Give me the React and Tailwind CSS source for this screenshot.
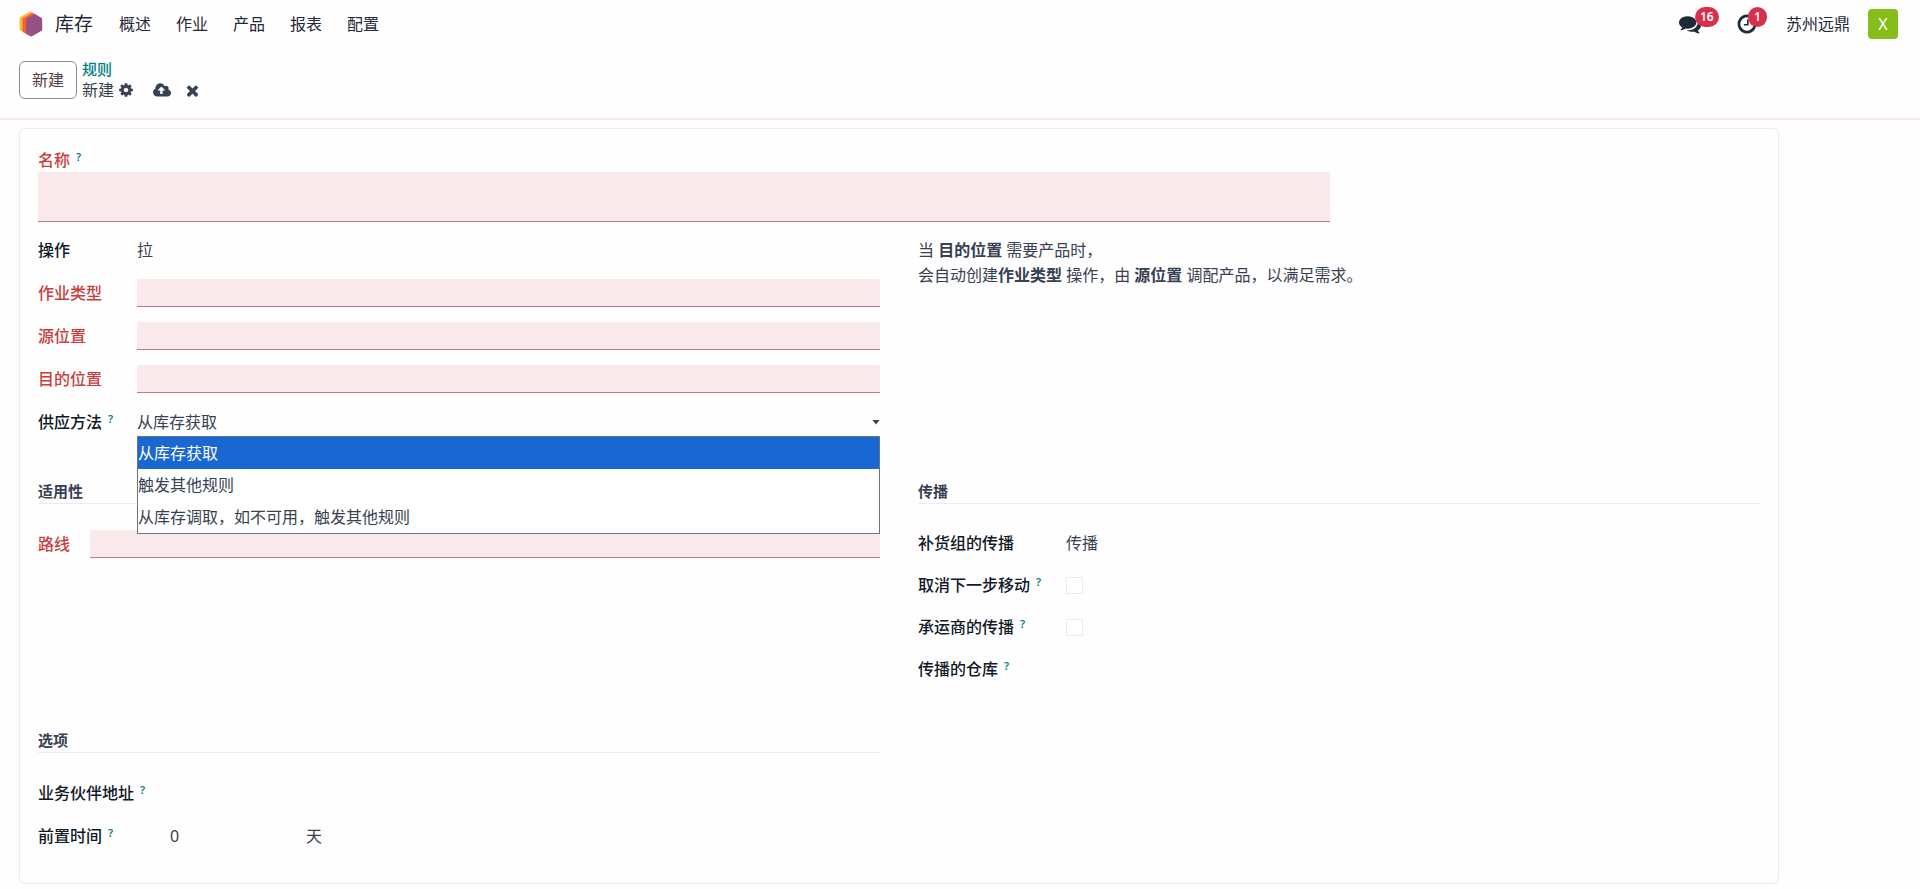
const MENU = ["概述", "作业", "产品", "报表", "配置"];

const ICONS = {
  comments: {
    box: "0 0 1792 1792",
    d: "M1408 768q0 139-94 257t-256.5 186.5-353.5 68.5q-86 0-176-16-124 88-278 128-36 9-86 16h-3q-11 0-20.5-8t-11.5-21q-1-3-1-6.5t.5-6.5 2-6l2.5-5 3.5-5.5 4-5 4.5-5 4-4.5q5-6 23-25t26-29.5 22.5-29 25-38.5 20.5-44q-124-72-195-177t-71-224q0-139 94-257t256.5-186.5 353.5-68.5 353.5 68.5 256.5 186.5 94 257zm384 256q0 120-71 224.5t-195 176.5q10 24 20.5 44t25 38.5 22.5 29 26 29.5 23 25q1 1 4 4.5t4.5 5 4 5 3.5 5.5l2.5 5 2 6 .5 6.5-1 6.5q-3 14-13 22t-22 7q-50-7-86-16-154-40-278-128-90 16-176 16-271 0-472-132 58 4 88 4 161 0 309-45t264-129q125-92 192-212t67-254q0-77-23-152 129 71 204 178t75 230z",
  },
  clock: {
    box: "0 0 1792 1792",
    d: "M1024 544v448q0 14-9 23t-23 9h-320q-14 0-23-9t-9-23v-64q0-14 9-23t23-9h224v-352q0-14 9-23t23-9h64q14 0 23 9t9 23zm416 352q0-148-73-273t-198-198-273-73-273 73-198 198-73 273 73 273 198 198 273 73 273-73 198-198 73-273zm224 0q0 209-103 385.5t-279.5 279.5-385.5 103-385.5-103-279.5-279.5-103-385.5 103-385.5 279.5-279.5 385.5-103 385.5 103 279.5 279.5 103 385.5z",
  },
  cog: {
    box: "0 0 1792 1792",
    d: "M1152 896q0-106-75-181t-181-75-181 75-75 181 75 181 181 75 181-75 75-181zm512-109v222q0 12-8 23t-20 13l-185 28q-19 54-39 91 35 50 107 138 10 12 10 25t-9 23q-27 37-99 108t-94 71q-12 0-26-9l-138-108q-44 23-91 38-16 136-29 186-7 28-36 28h-222q-14 0-24.5-8.5t-11.5-21.5l-28-184q-49-16-90-37l-141 107q-10 9-25 9-14 0-25-11-126-114-165-168-7-10-7-23 0-12 8-23 15-21 51-66.5t54-70.5q-27-50-41-99l-183-27q-13-2-21-12.5t-8-23.5v-222q0-12 8-23t19-13l186-28q14-46 39-92-40-57-107-138-10-12-10-24 0-10 9-23 26-36 98.5-107.5t94.5-71.5q13 0 26 10l138 107q44-23 91-38 16-136 29-186 7-28 36-28h222q14 0 24.5 8.5t11.5 21.5l28 184q49 16 90 37l142-107q9-9 24-9 13 0 25 10 129 119 165 170 7 8 7 22 0 12-8 23-15 21-51 66.5t-54 70.5q26 50 41 98l183 28q13 2 21 12.5t8 23.5z",
  },
  cloud: {
    box: "-64 0 1920 1792",
    d: "M1216 864q0-14-9-23l-352-352q-9-9-23-9t-23 9l-351 351q-10 12-10 24 0 14 9 23t23 9h224v352q0 13 9.5 22.5t22.5 9.5h192q13 0 22.5-9.5t9.5-22.5v-352h224q13 0 22.5-9.5t9.5-22.5zm640 288q0 159-112.5 271.5t-271.5 112.5h-1088q-185 0-316.5-131.5t-131.5-316.5q0-130 70-240t188-165q-2-30-2-43 0-212 150-362t362-150q156 0 285.5 87t188.5 231q71-62 166-62 106 0 181 75t75 181q0 76-41 138 130 31 213.5 135.5t83.5 238.5z",
  },
  times: {
    box: "0 0 1792 1792",
    d: "M1490 1322q0 40-28 68l-136 136q-28 28-68 28t-68-28l-294-294-294 294q-28 28-68 28t-68-28l-136-136q-28-28-28-68t28-68l294-294-294-294q-28-28-28-68t28-68l136-136q28-28 68-28t68 28l294 294 294-294q28-28 68-28t68 28l136 136q28 28 28 68t-28 68l-294 294 294 294q28 28 28 68z",
  },
};

function Icon({ name, className }) {
  return (
    <svg viewBox={ICONS[name].box} className={className} fill="currentColor" aria-hidden="true">
      <path d={ICONS[name].d} />
    </svg>
  );
}

function Logo() {
  return (
    <svg viewBox="0 0 24 26" className="h-[26px] w-6" aria-hidden="true">
      <path d="M1 6.200 10.500 0.800Q11.500 0.300 12.500 0.800L14 1.700V18L4 20.800 1 19.200Q0.500 18.800 0.500 18V7Q0.500 6.500 1 6.200z" fill="#fbb945" />
      <path d="M4 7.300 12.500 2.300Q13.500 1.700 14.500 2.300L17 3.800V18L9 24 4.200 21.200Q3.500 20.800 3.500 20V8Q3.500 7.600 4 7.300z" fill="#f86126" />
      <path d="M7.600 7.600 15 3.300Q15.700 3 16.400 3.300L22.600 6.900Q23.200 7.300 23.200 8V18.600Q23.200 19.300 22.600 19.700L13 25.200Q12.200 25.600 11.400 25.200L7.600 23Q7 22.600 7 22V8.700Q7 8 7.600 7.600z" fill="#985184" />
    </svg>
  );
}

function Help() {
  return <sup className="-top-[5px] ml-[6px] text-[11px] leading-none font-semibold text-[#017e84]">?</sup>;
}

function Label({ htmlFor, help, required, children }) {
  return (
    <label
      htmlFor={htmlFor}
      className={required ? "whitespace-nowrap font-medium text-[#c83f3c]" : "whitespace-nowrap font-medium text-[#111827]"}
    >
      {children}
      {help && <Help />}
    </label>
  );
}

function RequiredInput({ id }) {
  return (
    <input
      id={id}
      type="text"
      className="h-7 w-full min-w-0 rounded-t-xs border-b border-[#c5748a] bg-[#fae9ea] px-1 outline-none"
    />
  );
}

function SectionTitle({ children }) {
  return (
    <h2 className="mb-[18px] border-b border-[#ececee] text-[15px] leading-6 font-semibold text-[#374151]">
      {children}
    </h2>
  );
}

const ROW = "grid h-[43px] grid-cols-[99px_minmax(0,1fr)] items-center";
const ROW_RIGHT = "grid h-[42px] grid-cols-[148px_minmax(0,1fr)] items-center";
const CHECKBOX = "size-[17px] appearance-none border border-[#ebebed] bg-white";

function SupplyMethod() {
  return (
    <div className={ROW}>
      <Label htmlFor="method" help>供应方法</Label>
      <div className="relative">
        <select id="method" className="block h-7 w-full appearance-none bg-transparent outline-none" defaultValue="0">
          <option value="0">从库存获取</option>
          <option value="1">触发其他规则</option>
          <option value="2">从库存调取，如不可用，触发其他规则</option>
        </select>
        <svg viewBox="0 0 8 5" className="pointer-events-none absolute top-3 right-0 h-[5px] w-2" aria-hidden="true">
          <path d="M0.500 0h7l-3.500 4.500z" fill="#374151" />
        </svg>
        <ul
          role="listbox"
          aria-label="供应方法"
          className="absolute top-full left-0 z-10 w-full border border-[#6b7280] bg-white leading-8"
        >
          <li role="option" aria-selected="true" className="bg-[#1967d2] text-white">从库存获取</li>
          <li role="option" aria-selected="false">触发其他规则</li>
          <li role="option" aria-selected="false">从库存调取，如不可用，触发其他规则</li>
        </ul>
      </div>
    </div>
  );
}

export default function App() {
  return (
    <div className="min-h-screen bg-[#fefefe] font-['Noto_Sans','Noto_Sans_CJK_SC',sans-serif] text-base leading-6 text-[#374151]">
      <header className="border-b-2 border-[#f8e8ea] pb-[17px]">
        <nav className="flex h-12 items-center pr-[22px] pl-[19px] text-[#1f2937]">
          <a href="#home" className="flex items-center gap-3">
            <Logo />
            <span className="text-[19px]">库存</span>
          </a>
          <div className="ml-[26px] flex gap-[25px]">
            {MENU.map((item) => (
              <a key={item} href={"#" + item}>{item}</a>
            ))}
          </div>
          <div className="ml-auto flex items-center">
            <button type="button" aria-label="消息" className="relative">
              <Icon name="comments" className="size-[22px]" />
              <span className="absolute -top-[6px] left-4 rounded-full bg-[#d9304a] px-[5px] text-xs leading-5 font-semibold text-white">16</span>
            </button>
            <button type="button" aria-label="活动" className="relative ml-[35px]">
              <Icon name="clock" className="size-[22px]" />
              <span className="absolute -top-[6px] left-3 rounded-full bg-[#d9304a] px-[6px] text-xs leading-5 font-semibold text-white">1</span>
            </button>
            <button type="button" className="ml-7 flex items-center gap-[18px]">
              <span>苏州远鼎</span>
              <span className="flex size-[30px] items-center justify-center rounded bg-[#85bd1b] text-white">X</span>
            </button>
          </div>
        </nav>
        <div className="flex items-center gap-[5px] px-[19px] pt-[11px]">
          <button type="button" className="h-[38px] rounded-md border border-[#8f8a92] px-3 text-[#5b3a4c]">新建</button>
          <div>
            <a href="#rules" className="block text-[15px] leading-5 font-medium text-[#017e84]">规则</a>
            <div className="flex items-center leading-[22px]">
              <span>新建</span>
              <button type="button" aria-label="操作" className="ml-1"><Icon name="cog" className="size-4" /></button>
              <button type="button" aria-label="保存" className="ml-[19px]"><Icon name="cloud" className="h-[17px] w-[18px]" /></button>
              <button type="button" aria-label="放弃" className="ml-[13px]"><Icon name="times" className="size-[17px]" /></button>
            </div>
          </div>
        </div>
      </header>

      <main className="pt-2 pl-[19px]">
        <form className="max-w-[1760px] rounded-md border border-[#ececef] border-l-[#f6e6e9] px-[18px] pt-[19px] pb-[26px]">
          <Label htmlFor="name" help required>名称</Label>
          <textarea
            id="name"
            rows={1}
            className="block h-[50px] w-3/4 resize-none rounded-t-xs border-b border-[#c5748a] bg-[#fae9ea] outline-none"
          />

          <div className="grid grid-cols-2 gap-x-[38px]">
            <div className="pt-[6px]">
              <div className={ROW}>
                <Label htmlFor="action">操作</Label>
                <select id="action" className="h-7 appearance-none bg-transparent outline-none">
                  <option>拉</option>
                </select>
              </div>
              <div className={ROW}>
                <Label htmlFor="type" required>作业类型</Label>
                <RequiredInput id="type" />
              </div>
              <div className={ROW}>
                <Label htmlFor="source" required>源位置</Label>
                <RequiredInput id="source" />
              </div>
              <div className={ROW}>
                <Label htmlFor="dest" required>目的位置</Label>
                <RequiredInput id="dest" />
              </div>
              <SupplyMethod />
            </div>
            <p className="pt-4 leading-[25px]">
              当 <b>目的位置</b> 需要产品时，
              <br />
              会自动创建<b>作业类型</b> 操作，由 <b>源位置</b> 调配产品，以满足需求。
            </p>
          </div>

          <div className="mt-9 grid grid-cols-2 gap-x-[38px]">
            <section>
              <SectionTitle>适用性</SectionTitle>
              <div className="grid h-[43px] grid-cols-[52px_minmax(0,1fr)] items-center">
                <Label htmlFor="route" required>路线</Label>
                <RequiredInput id="route" />
              </div>
            </section>
            <section>
              <SectionTitle>传播</SectionTitle>
              <div className={ROW_RIGHT}>
                <Label htmlFor="group">补货组的传播</Label>
                <select id="group" className="h-7 appearance-none bg-transparent outline-none">
                  <option>传播</option>
                </select>
              </div>
              <div className={ROW_RIGHT}>
                <Label htmlFor="cancel" help>取消下一步移动</Label>
                <input id="cancel" type="checkbox" className={CHECKBOX} />
              </div>
              <div className={ROW_RIGHT}>
                <Label htmlFor="carrier" help>承运商的传播</Label>
                <input id="carrier" type="checkbox" className={CHECKBOX} />
              </div>
              <div className={ROW_RIGHT}>
                <Label htmlFor="warehouse" help>传播的仓库</Label>
                <input id="warehouse" type="text" className="h-7 bg-transparent outline-none" />
              </div>
            </section>
          </div>

          <div className="mt-[38px] grid grid-cols-2 gap-x-[38px]">
            <section>
              <SectionTitle>选项</SectionTitle>
              <div className="grid h-[43px] grid-cols-[132px_minmax(0,1fr)] items-center">
                <Label htmlFor="partner" help>业务伙伴地址</Label>
                <input id="partner" type="text" className="h-7 bg-transparent outline-none" />
              </div>
              <div className="grid h-[43px] grid-cols-[132px_136px_minmax(0,1fr)] items-center">
                <Label htmlFor="delay" help>前置时间</Label>
                <input id="delay" type="text" defaultValue="0" className="h-7 w-full bg-transparent outline-none" />
                <span>天</span>
              </div>
            </section>
          </div>
        </form>
      </main>
    </div>
  );
}
